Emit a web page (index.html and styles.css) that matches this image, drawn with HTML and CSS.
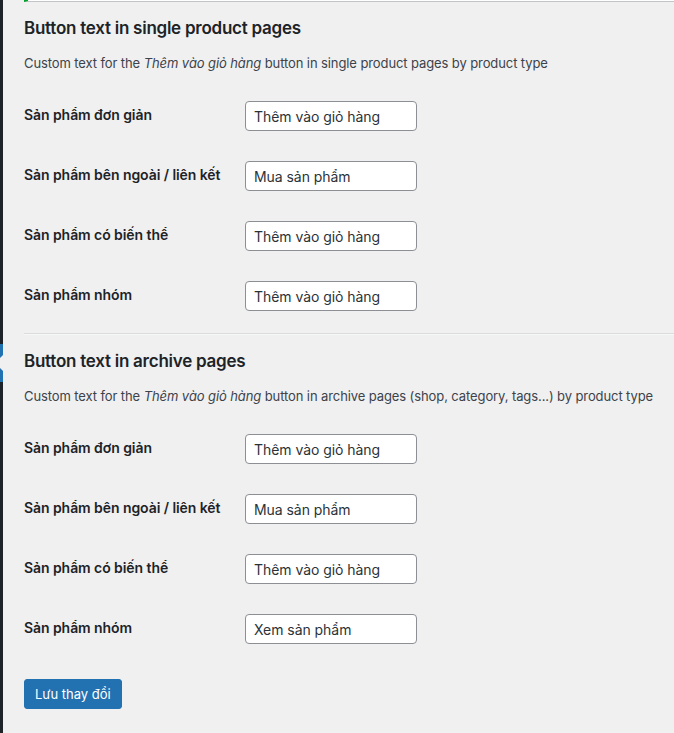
FILE: index.html
```html
<!DOCTYPE html>
<html lang="vi">
<head>
<meta charset="utf-8">
<link rel="stylesheet" href="styles.css">
</head>
<body>
<div class="layout">
  <div class="adminmenu">
    <div class="menu-current"></div>
  </div>
  <div class="content">
    <div class="notice"></div>

    <h2 class="section-title first">Button text in single product pages</h2>
    <p class="section-desc">Custom text for the <em>Thêm vào giỏ hàng</em> button in single product pages by product type</p>
    <div class="form-table">
      <div class="row"><div class="label">Sản phẩm đơn giản</div><div class="field"><input class="text-input" type="text" value="Thêm vào giỏ hàng"></div></div>
      <div class="row"><div class="label">Sản phẩm bên ngoài / liên kết</div><div class="field"><input class="text-input" type="text" value="Mua sản phẩm"></div></div>
      <div class="row"><div class="label">Sản phẩm có biến thể</div><div class="field"><input class="text-input" type="text" value="Thêm vào giỏ hàng"></div></div>
      <div class="row"><div class="label">Sản phẩm nhóm</div><div class="field"><input class="text-input" type="text" value="Thêm vào giỏ hàng"></div></div>
    </div>

    <hr class="divider">

    <h2 class="section-title">Button text in archive pages</h2>
    <p class="section-desc">Custom text for the <em>Thêm vào giỏ hàng</em> button in archive pages (shop, category, tags...) by product type</p>
    <div class="form-table">
      <div class="row"><div class="label">Sản phẩm đơn giản</div><div class="field"><input class="text-input" type="text" value="Thêm vào giỏ hàng"></div></div>
      <div class="row"><div class="label">Sản phẩm bên ngoài / liên kết</div><div class="field"><input class="text-input" type="text" value="Mua sản phẩm"></div></div>
      <div class="row"><div class="label">Sản phẩm có biến thể</div><div class="field"><input class="text-input" type="text" value="Thêm vào giỏ hàng"></div></div>
      <div class="row"><div class="label">Sản phẩm nhóm</div><div class="field"><input class="text-input" type="text" value="Xem sản phẩm"></div></div>
    </div>

    <div class="submit-row">
      <button class="button-primary" type="button">Lưu thay đổi</button>
    </div>
  </div>
</div>
</body>
</html>
```

FILE: styles.css
```css
* { box-sizing: border-box; }
html, body {
  margin: 0;
  padding: 0;
  background: #f0f0f1;
  height: 100%;
}
body {
  font-family: Inter, "Liberation Sans", Arial, sans-serif;
  font-size: 13px;
  color: #3c434a;
  overflow: hidden;
}
.layout {
  display: flex;
  min-height: 733px;
}
.adminmenu {
  width: 3px;
  flex: 0 0 3px;
  background: #1d2327;
  position: relative;
}
.menu-current {
  margin-top: 344px;
  height: 38px;
  background: #2271b1;
  position: relative;
}
.menu-current::after {
  content: "";
  position: absolute;
  right: 0;
  top: 11px;
  border-style: solid;
  border-width: 8px 8px 8px 0;
  border-color: transparent #f0f0f1 transparent transparent;
}
.content {
  flex: 1;
  padding-left: 21px;
  min-width: 0;
}
.notice {
  height: 2px;
  background: #fff;
  border-left: 4px solid #00a32a;
  border-bottom: 1px solid #c3c4c7;
}
.section-title {
  margin: 17px 0 0;
  font-size: 17px;
  line-height: 18px;
  font-weight: 600;
  color: #1d2327;
  letter-spacing: -0.25px;
}
.section-desc {
  margin: 17px 0 0;
  font-size: 13px;
  line-height: 19px;
  color: #3c434a;
  letter-spacing: -0.1px;
}
.form-table {
  margin-top: 13px;
  display: flex;
  flex-direction: column;
}
.row {
  display: flex;
  height: 60px;
}
.label {
  width: 221px;
  flex: 0 0 221px;
  padding-top: 20px;
  font-size: 14px;
  line-height: 18px;
  font-weight: 600;
  color: #1d2327;
  letter-spacing: -0.07px;
}
.field {
  padding-top: 15px;
}
.text-input {
  display: block;
  width: 172px;
  height: 30px;
  margin: 0;
  padding: 0 8px;
  border: 1px solid #8c8f94;
  border-radius: 4px;
  background: #fff;
  font-family: inherit;
  font-size: 14px;
  color: #2c3338;
  outline: none;
  letter-spacing: -0.05px;
}
.divider {
  margin: 7px 0 0;
  border: 0;
  border-top: 1px solid #dcdcde;
  border-bottom: 1px solid #f6f7f7;
  height: 0;
}
.submit-row {
  padding-top: 20px;
}
.button-primary {
  display: inline-block;
  height: 30px;
  padding: 0 10px;
  background: #2271b1;
  border: 1px solid #2271b1;
  border-radius: 3px;
  color: #fff;
  font-family: inherit;
  font-size: 13px;
  line-height: 28px;
  cursor: pointer;
}
```
